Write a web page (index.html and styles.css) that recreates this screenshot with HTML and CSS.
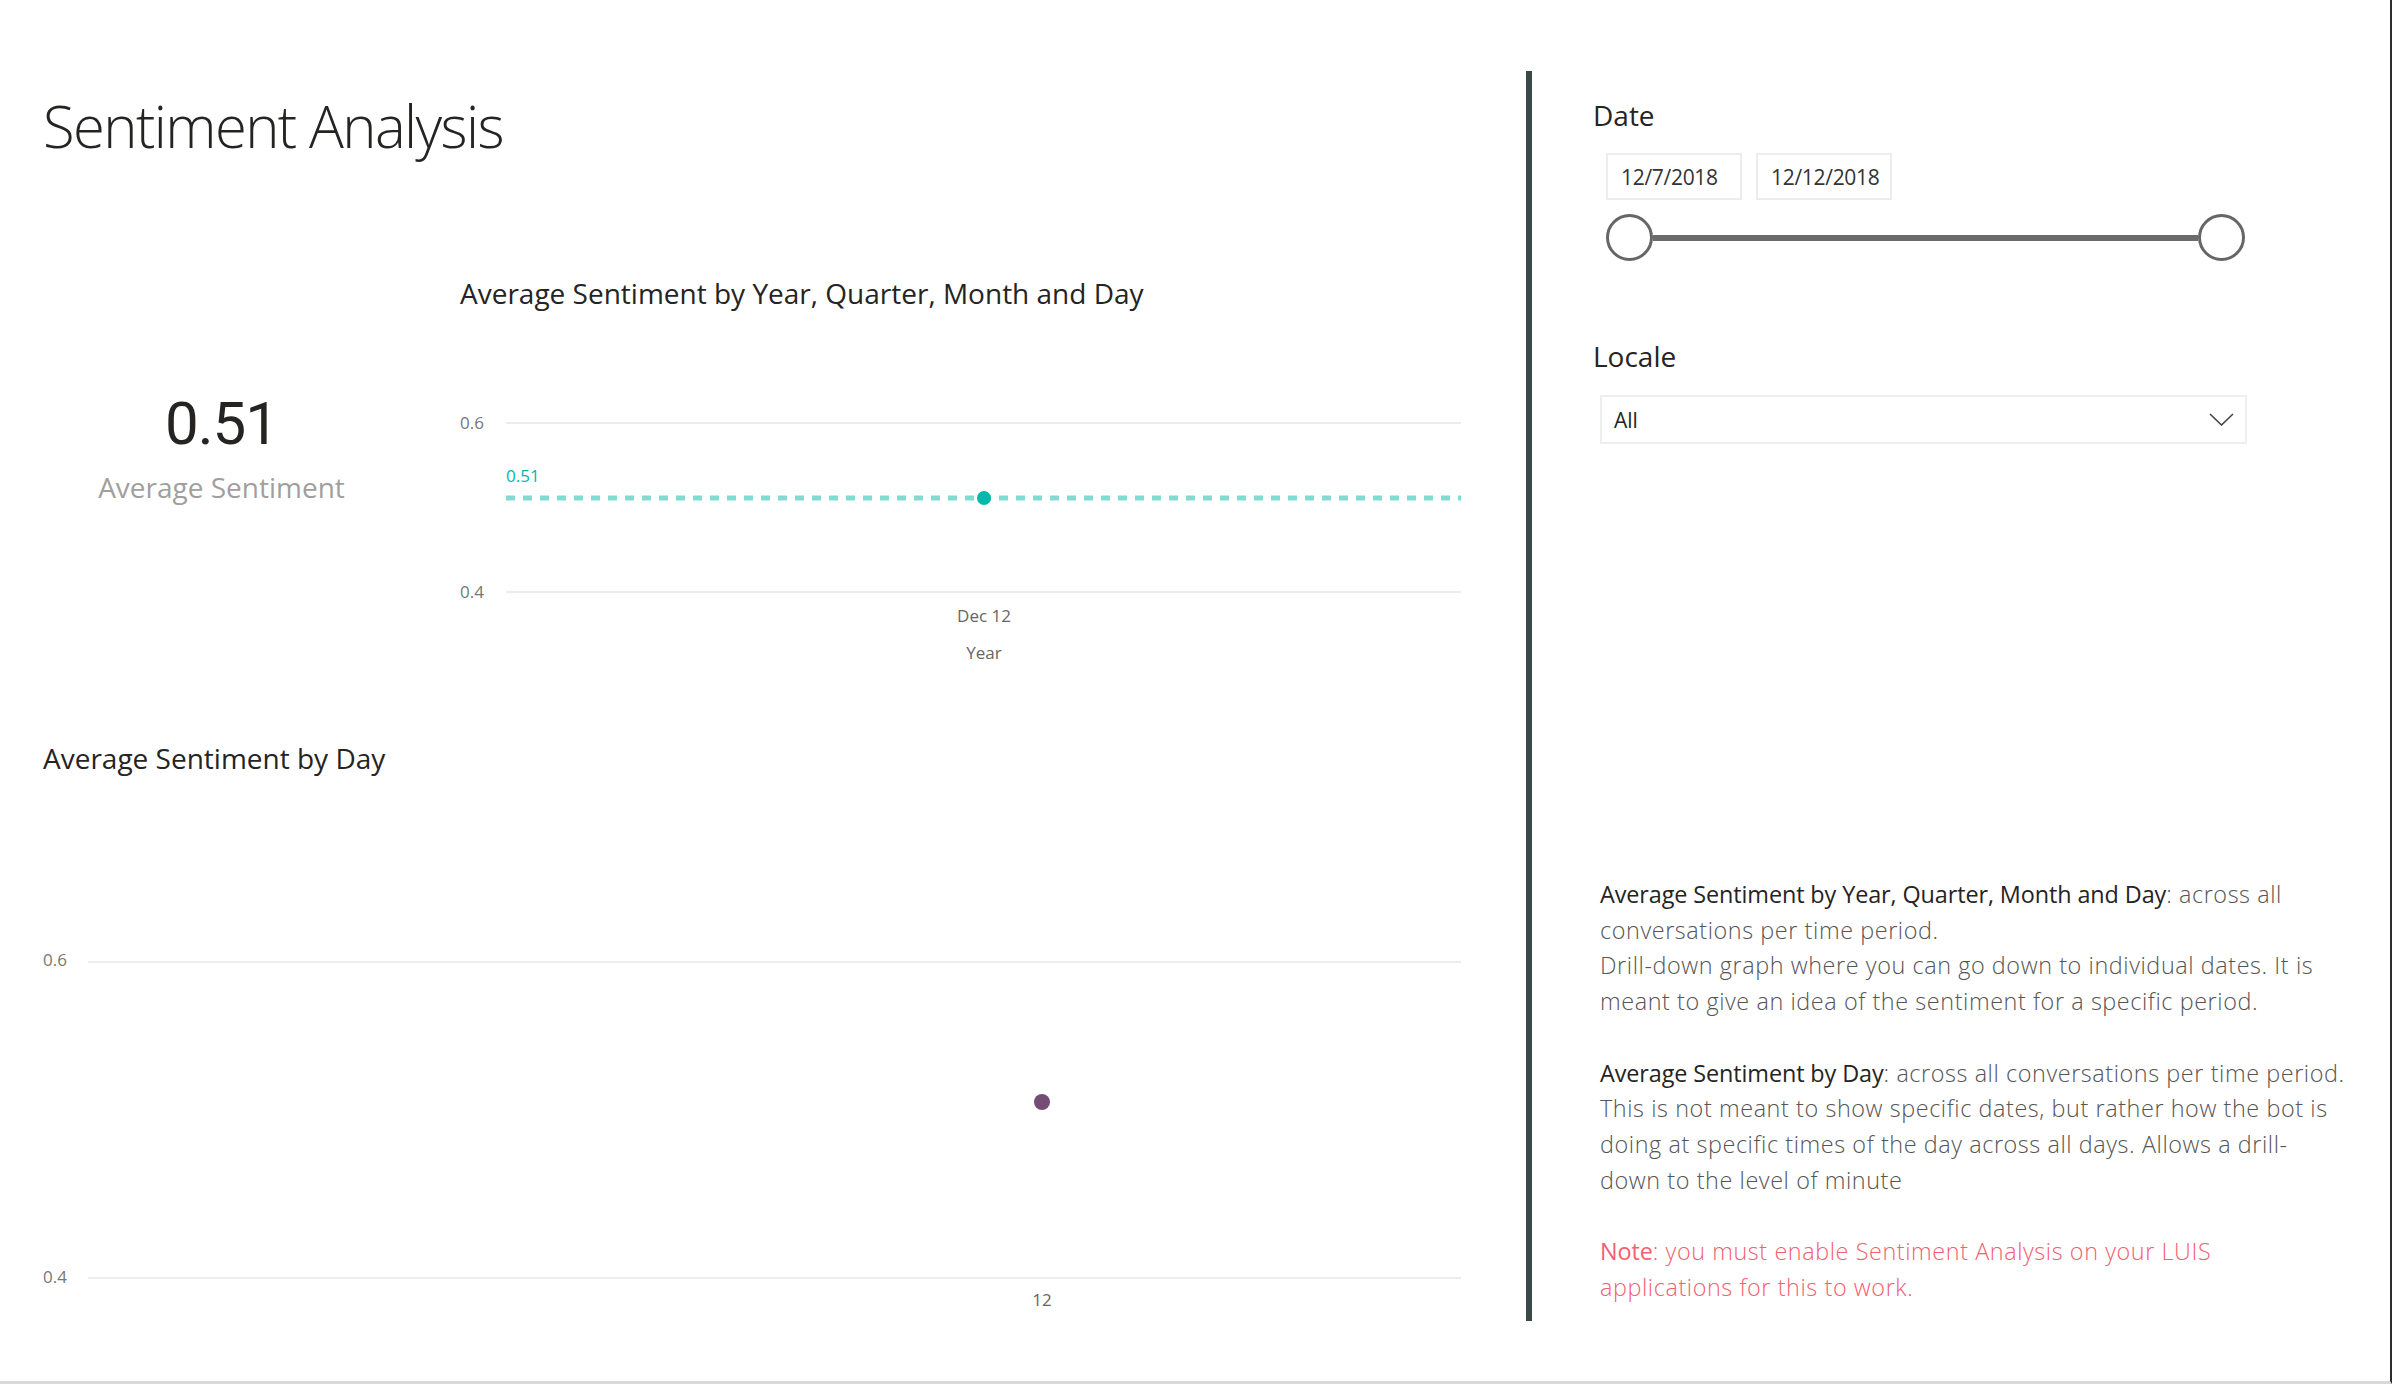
FILE: index.html
```html
<!DOCTYPE html>
<html lang="en">
<head>
<meta charset="utf-8">
<title>Sentiment Analysis</title>
<link rel="stylesheet" href="styles.css">
</head>
<body>
<div class="report">
  <main class="main">
    <h1 class="title">Sentiment Analysis</h1>

    <section class="top-row">
      <div class="card">
        <div class="card-value">0.51</div>
        <div class="card-label">Average Sentiment</div>
      </div>

      <div class="chart chart-period">
        <h2 class="chart-title">Average Sentiment by Year, Quarter, Month and Day</h2>
        <svg class="plot" width="1001" height="270" viewBox="0 0 1001 270">
          <line class="grid" x1="46" y1="23" x2="1001" y2="23"/>
          <line class="grid" x1="46" y1="192" x2="1001" y2="192"/>
          <text class="axis" x="0" y="29">0.6</text>
          <text class="axis" x="0" y="198">0.4</text>
          <line class="avg-line" x1="46" y1="98" x2="1001" y2="98"/>
          <text class="avg-label" x="46" y="82">0.51</text>
          <circle class="avg-dot" cx="524" cy="98" r="7"/>
          <text class="axis mid" x="524" y="222">Dec 12</text>
          <text class="axis mid" x="524" y="259">Year</text>
        </svg>
      </div>
    </section>

    <section class="chart chart-day">
      <h2 class="chart-title">Average Sentiment by Day</h2>
      <svg class="plot" width="1418" height="390" viewBox="0 0 1418 390">
        <line class="grid" x1="45" y1="23" x2="1418" y2="23"/>
        <line class="grid" x1="45" y1="339" x2="1418" y2="339"/>
        <text class="axis" x="0" y="27">0.6</text>
        <text class="axis" x="0" y="344">0.4</text>
        <circle class="day-dot" cx="999" cy="163" r="8"/>
        <text class="axis mid" x="999" y="367">12</text>
      </svg>
    </section>
  </main>

  <div class="divider"></div>

  <aside class="filters">
    <div class="slicer-label">Date</div>
    <div class="date-inputs">
      <div class="date-box">12/7/2018</div>
      <div class="date-box">12/12/2018</div>
    </div>
    <div class="range">
      <span class="handle"></span>
      <span class="track"></span>
      <span class="handle"></span>
    </div>

    <div class="slicer-label locale-label">Locale</div>
    <div class="dropdown">
      <span>All</span>
      <svg class="chevron" width="25" height="13" viewBox="0 0 25 13"><polyline points="1,1 12.5,12 24,1"/></svg>
    </div>

    <div class="notes">
      <p><span class="strong">Average Sentiment by Year, Quarter, Month and Day</span>: across all<br>conversations per time period.<br>Drill-down graph where you can go down to individual dates. It is<br>meant to give an idea of the sentiment for a specific period.</p>
      <p><span class="strong">Average Sentiment by Day</span>: across all conversations per time period.<br>This is not meant to show specific dates, but rather how the bot is<br>doing at specific times of the day across all days. Allows a drill-<br>down to the level of minute</p>
      <p class="note"><span class="strong">Note</span>: you must enable Sentiment Analysis on your LUIS<br>applications for this to work.</p>
    </div>
  </aside>
</div>
</body>
</html>
```

FILE: styles.css
```css
* {
  box-sizing: border-box;
  margin: 0;
  padding: 0;
}

body {
  margin: 0;
  background: #ffffff;
  font-family: "Open Sans", "Noto Sans", sans-serif;
  color: #252423;
}

.report {
  width: 2392px;
  height: 1384px;
  display: flex;
  border-right: 2px solid #2e2e2e;
  border-bottom: 3px solid #d9d9d9;
  overflow: hidden;
}

/* ---------- left area ---------- */
.main {
  width: 1526px;
  flex: none;
  padding-left: 43px;
}

.title {
  margin-top: 97px;
  font-size: 58px;
  font-weight: 300;
  line-height: 1;
  letter-spacing: -1.6px;
  color: #252423;
}

.top-row {
  display: flex;
  margin-top: 124px;
}

.card {
  width: 357px;
  flex: none;
  padding-top: 115px;
  text-align: center;
}

.card-value {
  font-family: "Roboto", "Open Sans", sans-serif;
  font-size: 60px;
  line-height: 1;
  letter-spacing: -1px;
  color: #252423;
}

.card-label {
  margin-top: 19px;
  font-size: 28px;
  line-height: 1;
  color: #a19f9d;
}

.chart-period {
  width: 1001px;
  margin-left: 60px;
}

.chart-title {
  font-size: 28px;
  font-weight: 400;
  line-height: 1;
  letter-spacing: 0;
  color: #252423;
}

.chart-period .plot {
  display: block;
  margin-top: 93px;
}

.chart-day {
  margin-top: 74px;
}

.chart-day .plot {
  display: block;
  margin-top: 167px;
}

.plot .grid {
  stroke: #ececec;
  stroke-width: 2;
}

.plot .axis {
  font-family: "Open Sans", "Noto Sans", sans-serif;
  font-size: 17px;
  fill: #777777;
}

.plot .mid {
  text-anchor: middle;
  fill: #666666;
}

.plot .avg-line {
  stroke: #80dcd3;
  stroke-width: 5;
  stroke-dasharray: 9 8;
}

.plot .avg-label {
  font-family: "Open Sans", "Noto Sans", sans-serif;
  font-size: 17px;
  fill: #01b8aa;
}

.plot .avg-dot {
  fill: #01b8aa;
}

.plot .day-dot {
  fill: #744c75;
}

/* ---------- divider ---------- */
.divider {
  width: 6px;
  flex: none;
  height: 1250px;
  margin-top: 71px;
  background: #3b4949;
}

/* ---------- filters ---------- */
.filters {
  flex: 1;
  padding-left: 61px;
}

.slicer-label {
  margin-top: 101px;
  font-size: 28px;
  line-height: 1;
  color: #252423;
}

.date-inputs {
  display: flex;
  gap: 14px;
  margin-top: 24px;
  margin-left: 13px;
}

.date-box {
  width: 136px;
  height: 47px;
  padding-left: 13px;
  display: flex;
  align-items: center;
  border: 2px solid #ececec;
  font-size: 21px;
  letter-spacing: -0.3px;
  color: #333333;
}

.range {
  display: flex;
  align-items: center;
  width: 639px;
  height: 47px;
  margin-top: 14px;
  margin-left: 13px;
}

.handle {
  width: 47px;
  height: 47px;
  flex: none;
  border: 3px solid #666666;
  border-radius: 50%;
  background: #ffffff;
}

.track {
  flex: 1;
  height: 6px;
  background: #6b6b6b;
}

.locale-label {
  margin-top: 81px;
}

.dropdown {
  display: flex;
  align-items: center;
  justify-content: space-between;
  width: 647px;
  height: 49px;
  margin-top: 25px;
  margin-left: 7px;
  padding: 0 11px 0 12px;
  border: 2px solid #eeeeee;
  font-size: 21px;
  color: #252423;
}

.chevron polyline {
  fill: none;
  stroke: #444444;
  stroke-width: 1.6;
}

.notes {
  margin-top: 433px;
  margin-left: 7px;
  font-size: 23.4px;
  font-weight: 300;
  line-height: 35.7px;
  letter-spacing: 0.58px;
  color: #555555;
  white-space: nowrap;
}

.notes p + p {
  margin-top: 35.7px;
}

.notes .strong {
  font-weight: 400;
  letter-spacing: -0.1px;
  color: #252423;
}

.notes .note,
.notes .note .strong {
  color: #f4606f;
}
```
